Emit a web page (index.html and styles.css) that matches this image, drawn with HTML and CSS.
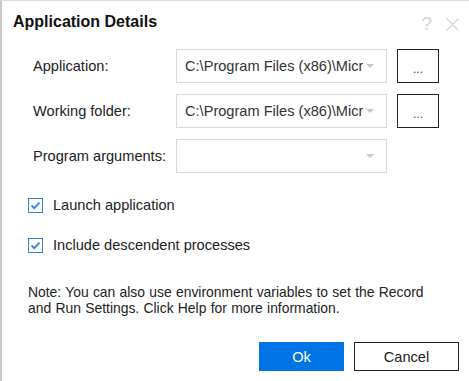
FILE: index.html
```html
<!DOCTYPE html>
<html lang="en">
<head>
  <meta charset="UTF-8">
  <title>Application Details</title>
  <link rel="stylesheet" href="styles.css">
</head>
<body>

  <div class="dialog">
    <div class="dialog-header">
      <h1>Application Details</h1>
      <div class="header-icons">
        <span class="help">?</span>
        <svg class="close" width="13" height="13" viewBox="0 0 13 13">
          <path d="M0.5 0.5 L12.5 12.5 M12.5 0.5 L0.5 12.5" stroke="#d4d4d4" stroke-width="1.3" fill="none"/>
        </svg>
      </div>
    </div>

    <div class="form-grid">
      <label>Application:</label>
      <div class="combo">
        <span class="combo-text">C:\Program Files (x86)\Microsoft Office\root\Office16\EXCEL.EXE</span>
        <span class="arrow"></span>
      </div>
      <button class="browse">...</button>

      <label>Working folder:</label>
      <div class="combo">
        <span class="combo-text">C:\Program Files (x86)\Microsoft Office\root\Office16</span>
        <span class="arrow"></span>
      </div>
      <button class="browse">...</button>

      <label>Program arguments:</label>
      <div class="combo">
        <span class="combo-text"></span>
        <span class="arrow"></span>
      </div>
    </div>

    <div class="checks">
      <label class="check-row">
        <svg class="checkbox" width="15" height="15" viewBox="0 0 15 15">
          <rect x="0.5" y="0.5" width="14" height="14" fill="#fff" stroke="#2f7fdb"/>
          <path d="M3.5 7.5 L6.3 10.2 L11.5 4.5" stroke="#2f7fdb" stroke-width="1.8" fill="none"/>
        </svg>
        Launch application
      </label>
      <label class="check-row">
        <svg class="checkbox" width="15" height="15" viewBox="0 0 15 15">
          <rect x="0.5" y="0.5" width="14" height="14" fill="#fff" stroke="#2f7fdb"/>
          <path d="M3.5 7.5 L6.3 10.2 L11.5 4.5" stroke="#2f7fdb" stroke-width="1.8" fill="none"/>
        </svg>
        Include descendent processes
      </label>
    </div>

    <p class="note">Note: You can also use environment variables to set the Record<br>and Run Settings. Click Help for more information.</p>

    <div class="actions">
      <button class="btn btn-primary">Ok</button>
      <button class="btn">Cancel</button>
    </div>
  </div>

</body>
</html>
```

FILE: styles.css
```css
body {
  margin: 0;
  font-family: "Liberation Sans", Arial, sans-serif;
  background: #fff;
}
.dialog {
  width: 469px;
  height: 381px;
  box-sizing: border-box;
  border-left: 2px solid #c8c8c8;
  border-top: 1px solid #dcdcdc;
  padding: 11px 10px 10px 11px;
  display: flex;
  flex-direction: column;
  color: #222;
  font-size: 14.6px;
}
.dialog-header {
  display: flex;
  justify-content: space-between;
  align-items: center;
  height: 20px;
}
h1 {
  margin: 0;
  font-size: 16px;
  font-weight: bold;
  color: #111;
  line-height: 20px;
}
.header-icons {
  display: flex;
  align-items: center;
  gap: 14px;
  margin-top: 4px;
}
.help {
  font-size: 19px;
  color: #d4d4d4;
  line-height: 20px;
}
.form-grid {
  margin: 17px 0 0 20px;
  display: grid;
  grid-template-columns: 133px 211px 42px;
  grid-auto-rows: 34px;
  column-gap: 10px;
  row-gap: 11px;
  align-items: center;
}
.form-grid label {
  white-space: nowrap;
}
.combo {
  height: 34px;
  box-sizing: border-box;
  border: 1px solid #dadada;
  display: flex;
  align-items: center;
  padding: 0 12px 0 8px;
  color: #333;
}
.combo-text {
  flex: 1;
  white-space: nowrap;
  overflow: hidden;
}
.arrow {
  width: 0;
  height: 0;
  border-left: 4px solid transparent;
  border-right: 4px solid transparent;
  border-top: 4px solid #c8c8c8;
  margin-left: 3px;
}
.browse {
  height: 34px;
  width: 42px;
  border: 1px solid #222;
  background: #fff;
  font-family: inherit;
  font-size: 12px;
  color: #444;
  padding: 6px 0 0;
}
.checks {
  margin: 22px 0 0 15px;
  display: flex;
  flex-direction: column;
  gap: 20px;
}
.check-row {
  display: flex;
  align-items: center;
  gap: 10px;
  height: 20px;
}
.note {
  margin: 29px 0 0 15px;
  font-size: 13.9px;
  line-height: 16px;
  word-spacing: 0.4px;
  color: #222;
}
.actions {
  margin-top: auto;
  display: flex;
  justify-content: flex-end;
  gap: 10px;
}
.btn {
  height: 29px;
  width: 105px;
  border: 1px solid #222;
  background: #fff;
  font-family: inherit;
  font-size: 14.6px;
  color: #222;
}
.btn-primary {
  width: 85px;
  border-color: #0073e6;
  background: #0073e6;
  color: #fff;
}
```
